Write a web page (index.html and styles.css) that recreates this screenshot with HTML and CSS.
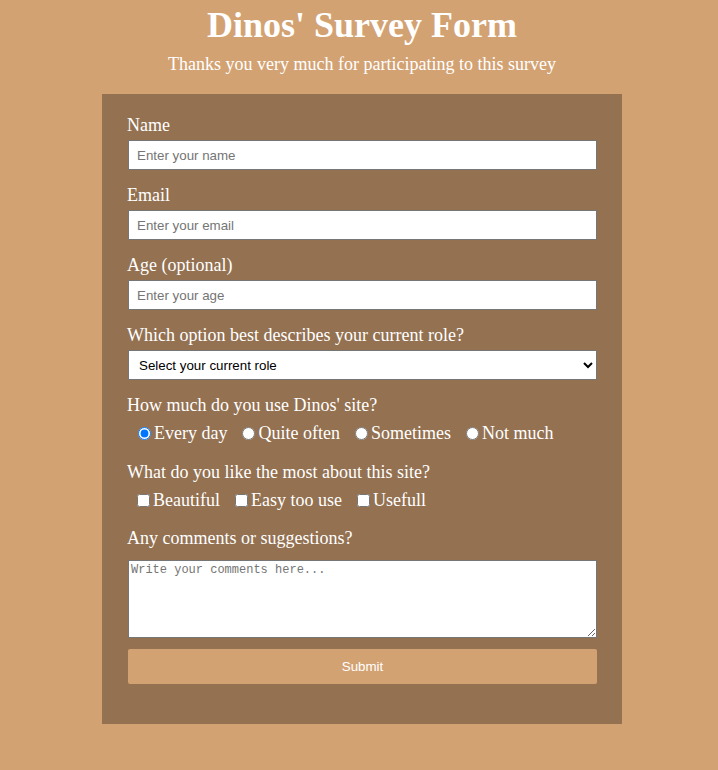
FILE: index.html
```html
<!DOCTYPE html>
<html lang="en">
<head>
<meta charset="utf-8">
<title>Dinos' Survey Form</title>
<link rel="stylesheet" href="styles.css">
</head>
<body>
<header class="header">
  <h1 class="title" id="title">Dinos' Survey Form</h1>
  <p class="description" id="description">Thanks you very much for participating to this survey</p>
</header>
<form class="survey" id="survey-form">
  <div class="field">
    <label class="label" for="name">Name</label>
    <input class="control" id="name" type="text" placeholder="Enter your name">
  </div>
  <div class="field">
    <label class="label" for="email">Email</label>
    <input class="control" id="email" type="email" placeholder="Enter your email">
  </div>
  <div class="field">
    <label class="label" for="age">Age (optional)</label>
    <input class="control" id="age" type="number" placeholder="Enter your age">
  </div>
  <div class="field">
    <label class="label" for="role">Which option best describes your current role?</label>
    <select class="control select" id="role">
      <option>Select your current role</option>
      <option>Student</option>
      <option>Full time job</option>
      <option>Other</option>
    </select>
  </div>
  <div class="field">
    <p class="label">How much do you use Dinos' site?</p>
    <div class="options">
      <label class="option"><input type="radio" name="use" checked>Every day</label>
      <label class="option"><input type="radio" name="use">Quite often</label>
      <label class="option"><input type="radio" name="use">Sometimes</label>
      <label class="option"><input type="radio" name="use">Not much</label>
    </div>
  </div>
  <div class="field">
    <p class="label">What do you like the most about this site?</p>
    <div class="options options--checks">
      <label class="option"><input type="checkbox">Beautiful</label>
      <label class="option"><input type="checkbox">Easy too use</label>
      <label class="option"><input type="checkbox">Usefull</label>
    </div>
  </div>
  <div class="field field--last">
    <label class="label label--comments" for="comments">Any comments or suggestions?</label>
    <textarea class="comments" id="comments" placeholder="Write your comments here..."></textarea>
  </div>
  <button class="submit" type="submit">Submit</button>
</form>
</body>
</html>
```

FILE: styles.css
```css
html, body {
  margin: 0;
  background: #d3a273;
}

body {
  padding-left: 6px;
  font-family: "Liberation Serif", "Times New Roman", serif;
  font-size: 18px;
  color: #ffffff;
}

.header {
  text-align: center;
}

.title {
  margin: 4px 0 8px;
  font-size: 36px;
  line-height: 42px;
  font-weight: bold;
}

.description {
  margin: 0;
  font-size: 18px;
  line-height: 21px;
}

.survey {
  width: 520px;
  box-sizing: border-box;
  margin: 19px auto 0;
  padding: 21px 25px 40px;
  background: #937151;
}

.field {
  margin-bottom: 15px;
}

.field--last {
  margin-bottom: 11px;
}

.label {
  display: block;
  margin: 0 0 4px;
  line-height: 21px;
}

.label--comments {
  margin-bottom: 11px;
}

.control {
  display: block;
  width: calc(100% - 1px);
  height: 30px;
  box-sizing: border-box;
  margin: 0 0 0 1px;
  padding: 0 8px;
  border: 1px solid #767676;
  background: #ffffff;
  font-family: "Liberation Sans", Arial, sans-serif;
  font-size: 13.333px;
  color: #000000;
}

.control::placeholder {
  color: #757575;
}

.select {
  padding: 0 6px;
}

.options {
  display: flex;
  align-items: center;
  gap: 10px;
  height: 27px;
  padding-left: 6px;
}

.options--checks {
  gap: 11px;
  height: 26px;
}

.option {
  display: flex;
  align-items: center;
  line-height: 21px;
}

.option input {
  margin-top: 0;
  margin-bottom: 0;
}

.comments {
  display: block;
  width: calc(100% - 1px);
  height: 78px;
  box-sizing: border-box;
  margin: 0 0 0 1px;
  padding: 2px;
  border: 1px solid #767676;
  background: #ffffff;
  font-family: "Liberation Mono", "DejaVu Sans Mono", monospace;
  font-size: 12px;
  resize: both;
}

.comments::placeholder {
  color: #757575;
}

.submit {
  display: block;
  width: calc(100% - 1px);
  height: 35px;
  margin: 0 0 0 1px;
  border: none;
  border-radius: 2px;
  background: #d3a273;
  color: #ffffff;
  font-family: "Liberation Sans", Arial, sans-serif;
  font-size: 13.333px;
}
```
